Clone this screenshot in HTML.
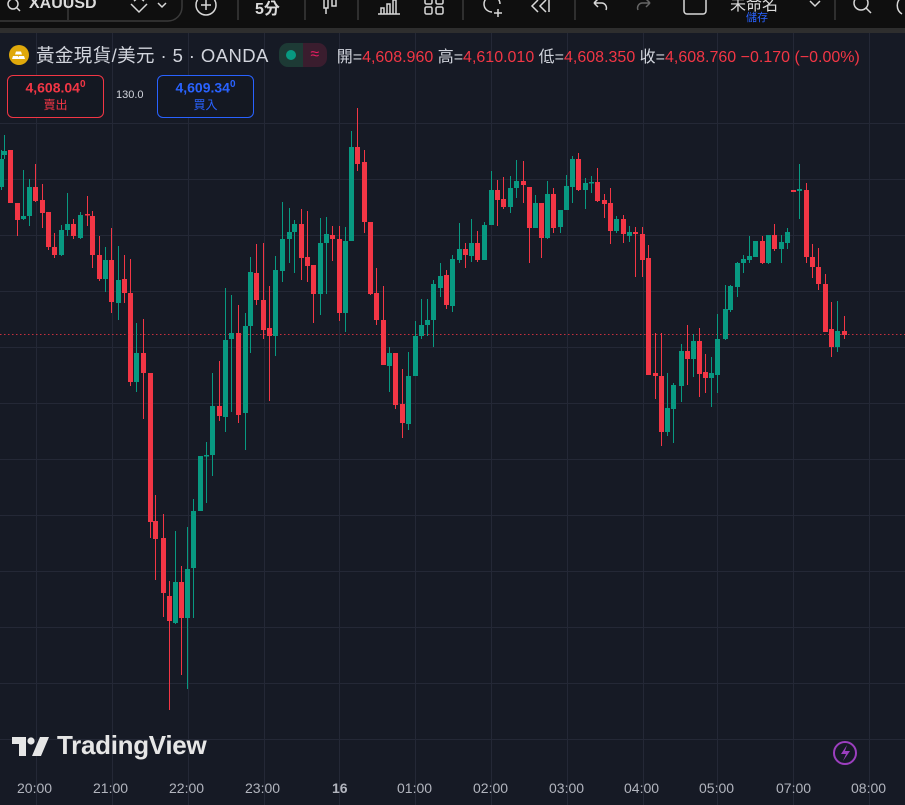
<!DOCTYPE html>
<html><head><meta charset="utf-8">
<style>
*{margin:0;padding:0;box-sizing:border-box}
body{width:905px;height:805px;overflow:hidden;background:#161a25;font-family:"Liberation Sans","Noto Sans CJK TC",sans-serif;position:relative}
#tb{position:absolute;left:0;top:0;width:905px;height:28px;background:#0f0f0f}
#sep{position:absolute;left:0;top:28px;width:905px;height:5px;background:#2e2e2e}
.t{position:absolute;color:#dbdbdb;font-size:15px;font-weight:bold;white-space:nowrap}
#legend{position:absolute;left:8px;top:42px;font-size:18.5px;color:#d1d4dc;white-space:nowrap;display:flex;align-items:center}
.vals{font-size:16px;color:#d1d4dc;margin-left:10px}
.vals b{font-weight:normal;color:#f23645}
.box{position:absolute;top:75px;width:97px;height:43px;border-radius:6px;background:#141822;text-align:center;font-weight:bold}
.ax{position:absolute;top:780px;font-size:14px;color:#b2b5be}
</style></head><body>
<svg width="905" height="805" style="position:absolute;left:0;top:0" id="ch">
<g stroke="#242836" stroke-width="1" id="grid"></g>
<line x1="0" y1="334.5" x2="905" y2="334.5" stroke="#f23645" stroke-dasharray="1.5,2.5" stroke-width="1" opacity="0.8"/>
<g id="c"></g>
<circle cx="845" cy="753" r="11" fill="none" stroke="#9c3fbf" stroke-width="2"/>
<path d="M847 745 L841 754 L846 754 L843 761 L850 751 L845 751 Z" fill="#9c3fbf"/>
</svg>
<div id="tb"></div><div id="sep"></div>
<svg width="905" height="28" style="position:absolute;left:0;top:0" fill="none" stroke="#d8d8d8" stroke-width="1.5">
<rect x="-20" y="-20" width="202" height="41" rx="14" stroke="#3a3a3a"/>
<circle cx="13" cy="4" r="5"/><line x1="17" y1="8" x2="20" y2="11"/>
<line x1="68" y1="0" x2="68" y2="20" stroke="#3a3a3a"/>
<path d="M131 4 L139 12 L147 4 M134 1 L139 -3 L144 1"/><path d="M158 3 L162 7 L166 3"/>
<circle cx="206" cy="5" r="10"/><path d="M206 0 V10 M201 5 H211"/>
<line x1="238" y1="0" x2="238" y2="20" stroke="#3a3a3a"/>
<line x1="305" y1="0" x2="305" y2="20" stroke="#3a3a3a"/>
<rect x="324" y="-2" width="4" height="10"/><line x1="326" y1="8" x2="326" y2="14"/><rect x="332" y="-2" width="4" height="8"/>
<line x1="358" y1="0" x2="358" y2="20" stroke="#3a3a3a"/>
<path d="M378 14 H400 M381 14 V8 H384 V14 M387 14 V4 H390 V14 M393 14 V0 H396 V14"/>
<rect x="425" y="-3" width="7" height="7" rx="1.5"/><rect x="436" y="-3" width="7" height="7" rx="1.5"/><rect x="425" y="7" width="7" height="7" rx="1.5"/><rect x="436" y="7" width="7" height="7" rx="1.5"/>
<line x1="463" y1="0" x2="463" y2="20" stroke="#3a3a3a"/>
<path d="M492 12 A8 8 0 1 1 500 4"/><path d="M498 9 V17 M494 13 H502"/>
<path d="M538 0 L532 6 L538 12 M546 0 L540 6 L546 12 M549 0 V12"/>
<line x1="575" y1="0" x2="575" y2="20" stroke="#3a3a3a"/>
<path d="M594 3 L598 -1 M594 3 L598 7 M594 3 H602 A5 5 0 0 1 606 10"/>
<path d="M650 3 L646 -1 M650 3 L646 7 M650 3 H642 A5 5 0 0 0 638 10" stroke="#666"/>
<rect x="684" y="-6" width="22" height="20" rx="3"/>
<path d="M810 1 L815 6 L820 1"/>
<line x1="835" y1="0" x2="835" y2="20" stroke="#3a3a3a"/>
<circle cx="861" cy="3" r="7"/><line x1="866" y1="8" x2="871" y2="13"/>
<path d="M902 -3 A10 10 0 0 0 902 14"/>
</svg>
<div class="t" style="left:29px;top:-5px;font-size:16px">XAUUSD</div>
<div class="t" style="left:255px;top:-5px;font-size:16px">5分</div>
<div class="t" style="left:730px;top:-9px;font-size:16px;font-weight:normal">未命名</div>
<div class="t" style="left:746px;top:9px;font-size:11px;color:#2962ff;font-weight:normal">儲存</div>

<div id="legend">
<svg width="22" height="22" style="margin-right:6px"><circle cx="11" cy="11" r="10" fill="#e0a90b"/><path d="M5 12 h5 l1 3 h-7z M11 12 h5 l1 3 h-7z M8 7.5 h5 l1 3 h-7z" fill="#fff"/></svg>
<span style="letter-spacing:0.4px">黃金現貨/美元 · 5 · OANDA</span>
<span style="display:inline-flex;margin-left:10px;height:24px;border-radius:9px;overflow:hidden">
<span style="width:24px;background:#1d3a35;display:flex;align-items:center;justify-content:center"><i style="width:10px;height:10px;border-radius:50%;background:#089981;display:block"></i></span>
<span style="width:24px;background:#3a1d2e;color:#e91e63;font-size:16px;display:flex;align-items:center;justify-content:center">≈</span></span>
<span class="vals">開=<b>4,608.960</b> 高=<b>4,610.010</b> 低=<b>4,608.350</b> 收=<b>4,608.760</b> <b>−0.170 (−0.00%)</b></span>
</div>
<div class="box" style="left:7px;border:1px solid #f23645;color:#f23645"><div style="font-size:14px;margin-top:3px">4,608.04<sup style="font-size:10px">0</sup></div><div style="font-size:12px;font-weight:normal">賣出</div></div>
<div style="position:absolute;left:116px;top:89px;font-size:11px;color:#d1d4dc">130.0</div>
<div class="box" style="left:157px;border:1px solid #2962ff;color:#2962ff"><div style="font-size:14px;margin-top:3px">4,609.34<sup style="font-size:10px">0</sup></div><div style="font-size:12px;font-weight:normal">買入</div></div>

<div style="position:absolute;left:12px;top:730px;display:flex;align-items:center;color:#e6e6e6">
<svg width="38" height="22"><path d="M0 2 H14 V21 H7 V9 H0 Z" fill="#e6e6e6"/><circle cx="19" cy="6" r="3.6" fill="#e6e6e6"/><path d="M28 2 H37 L29 21 H20 Z" fill="#e6e6e6"/></svg>
<span style="font-size:26px;font-weight:bold;margin-left:7px;letter-spacing:-0.3px">TradingView</span></div>

<div class="ax" style="left:17px">20:00</div><div class="ax" style="left:93px">21:00</div><div class="ax" style="left:169px">22:00</div><div class="ax" style="left:245px">23:00</div><div class="ax" style="left:332px;font-weight:bold">16</div><div class="ax" style="left:397px">01:00</div><div class="ax" style="left:473px">02:00</div><div class="ax" style="left:549px">03:00</div><div class="ax" style="left:624px">04:00</div><div class="ax" style="left:699px">05:00</div><div class="ax" style="left:776px">07:00</div><div class="ax" style="left:851px">08:00</div>
<script>
var ns="http://www.w3.org/2000/svg",g=document.getElementById('grid'),c=document.getElementById('c');
[36,112,188,264,339,415,491,567,643,717,793,869].forEach(function(x){var l=document.createElementNS(ns,'line');l.setAttribute('x1',x+.5);l.setAttribute('x2',x+.5);l.setAttribute('y1',33);l.setAttribute('y2',805);g.appendChild(l);});
for(var y=123;y<770;y+=56){var l=document.createElementNS(ns,'line');l.setAttribute('x1',0);l.setAttribute('x2',905);l.setAttribute('y1',y+.5);l.setAttribute('y2',y+.5);g.appendChild(l);}
var d=[[1,159,187,150,190,1],[4,151,155,135,159,1],[10,150,203,150,203,0],[17,203,220,203,236,0],[23,216,219,170,220,1],[29,187,216,179,226,1],[35,187,201,164,202,0],[42,200,213,184,228,0],[48,212,247,212,250,0],[54,247,255,233,258,0],[61,230,255,225,256,1],[67,224,230,193,236,1],[73,224,236,219,239,0],[80,215,238,212,239,1],[87,214,215,196,226,0],[92,216,255,211,268,0],[99,255,279,236,281,0],[105,260,279,247,292,1],[111,260,302,228,313,0],[118,280,303,246,320,1],[124,279,293,255,303,0],[130,293,382,259,386,0],[136,353,382,323,392,1],[143,353,373,319,419,0],[150,373,522,373,538,0],[155,521,539,495,580,0],[163,538,593,514,617,0],[169,596,621,581,710,0],[175,582,623,531,624,1],[181,582,618,566,675,0],[187,569,618,527,689,1],[193,511,568,499,618,1],[200,456,511,456,511,1],[206,455,456,442,503,1],[212,406,455,373,476,1],[219,406,416,361,421,0],[225,340,417,288,432,1],[231,333,339,295,412,1],[238,333,415,305,423,0],[245,326,413,313,450,1],[250,272,326,257,353,1],[256,273,300,244,305,0],[263,300,330,243,339,0],[269,328,336,286,401,0],[275,270,336,256,356,1],[282,239,271,202,282,1],[289,232,239,208,263,1],[294,224,232,220,273,1],[301,224,258,209,280,0],[307,257,266,211,282,0],[313,265,294,265,323,0],[320,243,294,218,315,1],[326,234,243,217,294,1],[332,235,239,226,261,0],[339,239,313,226,321,0],[345,241,313,227,332,1],[351,147,241,131,241,1],[357,147,164,108,171,0],[364,162,222,150,233,0],[370,222,294,222,295,0],[376,293,320,268,325,0],[383,320,365,286,365,0],[389,353,366,347,392,1],[395,353,405,353,409,0],[402,404,423,369,438,0],[408,376,424,352,430,1],[415,336,376,321,376,1],[421,325,336,299,339,1],[427,320,325,299,336,1],[433,284,320,280,347,1],[440,276,288,263,297,1],[446,275,305,270,309,0],[452,259,306,255,312,1],[459,249,260,223,263,1],[465,249,255,243,268,0],[471,243,256,219,262,1],[477,243,260,231,262,0],[484,225,260,222,260,1],[491,190,225,171,225,1],[497,190,200,180,226,0],[503,199,207,177,209,0],[510,188,207,176,213,1],[516,181,188,160,198,1],[523,181,185,161,203,0],[529,187,228,187,263,0],[535,203,228,195,228,1],[541,203,238,203,258,0],[547,194,238,181,239,1],[553,194,228,188,233,0],[560,210,227,210,233,1],[566,186,210,175,210,1],[572,159,187,156,203,1],[578,159,190,153,191,0],[585,183,190,178,209,1],[591,182,183,176,193,1],[597,182,201,168,202,0],[604,200,204,194,218,0],[610,203,231,188,244,0],[616,219,231,216,233,1],[623,219,234,215,243,0],[629,232,236,226,242,1],[635,232,234,227,277,0],[642,234,260,227,277,0],[648,258,375,245,375,0],[655,373,376,333,399,0],[661,376,432,333,446,0],[667,408,432,373,436,1],[673,385,409,383,443,1],[681,351,386,344,402,1],[687,351,359,325,385,0],[693,341,359,334,377,1],[699,341,374,328,397,0],[705,372,378,354,393,0],[711,373,378,357,407,1],[717,339,375,314,393,1],[725,309,339,285,340,1],[730,286,310,285,312,1],[737,263,287,262,297,1],[743,259,263,255,273,1],[749,256,260,236,263,1],[755,241,257,241,257,1],[762,241,263,236,264,0],[768,235,263,235,264,1],[774,235,249,224,251,0],[781,242,249,235,263,1],[787,232,243,228,249,1],[793,190,192,190,192,0],[799,189,191,164,219,1],[806,190,257,183,263,0],[812,257,267,244,278,0],[818,267,284,248,290,0],[825,284,332,274,332,0],[831,329,347,302,357,0],[837,331,347,301,352,1],[844,331,335,316,339,0]];
d.forEach(function(a){var col=a[5]?'#089981':'#f23645';var l=document.createElementNS(ns,'line');l.setAttribute('x1',a[0]+.5);l.setAttribute('x2',a[0]+.5);l.setAttribute('y1',a[3]);l.setAttribute('y2',a[4]);l.setAttribute('stroke',col);c.appendChild(l);var r=document.createElementNS(ns,'rect');r.setAttribute('x',a[0]-2);r.setAttribute('width',5);r.setAttribute('y',a[1]);r.setAttribute('height',Math.max(1.5,a[2]-a[1]));r.setAttribute('fill',col);c.appendChild(r);});
</script>
</body></html>
